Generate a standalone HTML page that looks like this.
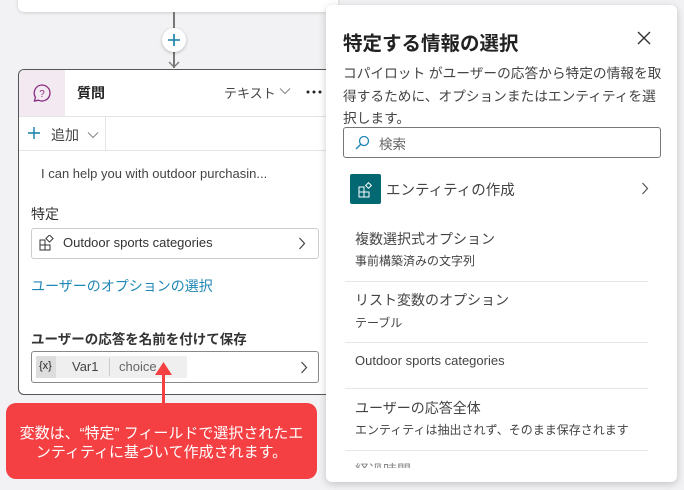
<!DOCTYPE html>
<html><head><meta charset="utf-8"><style>
*{box-sizing:border-box;margin:0;padding:0}
body{width:684px;height:490px;overflow:hidden;background:#f2f2f4;font-family:"Liberation Sans","Noto Sans CJK JP",sans-serif;position:relative;color:#242424}
.a{position:absolute}
</style></head><body>
<div class="a" style="left:18px;top:-10px;width:320px;height:22px;background:#fff;border-radius:6px;box-shadow:0 1px 3px rgba(0,0,0,.15)"></div>
<div class="a" style="left:173px;top:12px;width:1.5px;height:56px;background:#777"></div>
<div class="a" style="left:162px;top:28px;width:24px;height:24px;border-radius:50%;background:#fff;box-shadow:0 1px 3px rgba(0,0,0,.25)"></div>
<svg class="a" style="left:167px;top:33px" width="14" height="14"><path d="M7 1V13M1 7H13" stroke="#0f7fa8" stroke-width="1.6"/></svg>
<svg class="a" style="left:167px;top:60px" width="14" height="10"><path d="M2 2 L7 7 L12 2" stroke="#777" stroke-width="1.3" fill="none"/></svg>
<div class="a" style="left:18px;top:69px;width:330px;height:326px;background:#fff;border:1.5px solid #555;border-radius:6px;overflow:hidden">
 <div class="a" style="left:0;top:0;width:46px;height:46px;background:#f2e9f1"></div>
 <svg class="a" style="left:13px;top:13px" width="20" height="20"><path d="M10 2a8 8 0 1 1-3.5 15.2L2.5 18l.9-3.8A8 8 0 0 1 10 2z" stroke="#8a2a82" stroke-width="1.3" fill="none"/><text x="10" y="14" font-size="10" text-anchor="middle" fill="#8a2a82" font-family="Liberation Sans">?</text></svg>
 <div class="a" style="left:58px;top:13px;font-size:14px;font-weight:bold">質問</div>
 <div class="a" style="left:205px;top:13px;font-size:13px;color:#444">テキスト</div>
 <svg class="a" style="left:260px;top:17px" width="12" height="8"><path d="M1 1.5L6 6.5L11 1.5" stroke="#888" stroke-width="1.1" fill="none"/></svg>
 <svg class="a" style="left:287px;top:20px" width="16" height="4"><circle cx="2" cy="2" r="1.5" fill="#222"/><circle cx="8" cy="2" r="1.5" fill="#222"/><circle cx="14" cy="2" r="1.5" fill="#222"/></svg>
 <div class="a" style="left:0;top:46px;width:100%;height:1px;background:#e4e4e4"></div>
 <svg class="a" style="left:9px;top:57px" width="12" height="12"><path d="M6 0V12M0 6H12" stroke="#0f7fa8" stroke-width="1.4"/></svg>
 <div class="a" style="left:32px;top:55px;font-size:14px;color:#444">追加</div>
 <svg class="a" style="left:68px;top:61px" width="12" height="8"><path d="M1 1.5L6 6.5L11 1.5" stroke="#888" stroke-width="1.1" fill="none"/></svg>
 <div class="a" style="left:86px;top:47px;width:1px;height:33px;background:#e4e4e4"></div>
 <div class="a" style="left:0;top:80px;width:100%;height:1px;background:#e4e4e4"></div>
 <div class="a" style="left:22px;top:96px;font-size:13px;color:#444">I can help you with outdoor purchasin...</div>
 <div class="a" style="left:12px;top:134px;font-size:14px;color:#333">特定</div>
 <div class="a" style="left:12px;top:158px;width:288px;height:31px;border:1px solid #ccc;border-radius:3px;font-size:13px;padding:6px 0 0 31px;color:#333">Outdoor sports categories</div>
 <svg class="a" style="left:279px;top:167px" width="8" height="13"><path d="M1.5 1L6.5 6.5L1.5 12" stroke="#444" stroke-width="1.2" fill="none"/></svg>
 <svg class="a" style="left:20px;top:165px" width="16" height="16"><rect x="1" y="5" width="5" height="5" fill="none" stroke="#333"/><rect x="1" y="10" width="5" height="5" fill="none" stroke="#333"/><rect x="6" y="10" width="5" height="5" fill="none" stroke="#333"/><rect x="8" y="1" width="5" height="5" fill="none" stroke="#333" transform="rotate(45 10.5 3.5)"/></svg>
 <div class="a" style="left:12px;top:206px;font-size:14px;color:#1f87b5">ユーザーのオプションの選択</div>
 <div class="a" style="left:12px;top:258px;font-size:13.5px;font-weight:bold;color:#333">ユーザーの応答を名前を付けて保存</div>
 <div class="a" style="left:12px;top:281px;width:288px;height:32px;border:1.5px solid #888;border-radius:3px"></div>
 <div class="a" style="left:17px;top:286px;width:20px;height:22px;background:#ddd;font-size:11px;padding:4px 0 0 3px">{x}</div>
 <div class="a" style="left:37px;top:286px;width:131px;height:22px;background:#efefef"></div>
 <div class="a" style="left:53px;top:289px;font-size:13px;color:#444">Var1</div>
 <div class="a" style="left:90px;top:288px;width:1px;height:18px;background:#ccc"></div>
 <div class="a" style="left:100px;top:289px;font-size:13px;color:#666">choice</div>
 <svg class="a" style="left:281px;top:291px" width="8" height="13"><path d="M1.5 1L6.5 6.5L1.5 12" stroke="#444" stroke-width="1.2" fill="none"/></svg>
</div>
<div class="a" style="left:162px;top:372px;width:3px;height:32px;background:#f44043"></div>
<svg class="a" style="left:155px;top:362px" width="17" height="14"><path d="M8.5 0 L17 13 L0 13 Z" fill="#f44043"/></svg>
<div class="a" style="left:6px;top:403px;width:311px;height:76px;background:#f44043;border-radius:10px;color:#fff;font-size:15px;line-height:19px;text-align:center;padding-top:21px;white-space:nowrap">変数は、“特定” フィールドで選択されたエ<br>ンティティに基づいて作成されます。</div>

<div class="a" style="left:326px;top:5px;width:351px;height:477px;background:#fff;border-radius:6px;box-shadow:0 2px 8px rgba(0,0,0,.2)">
 <div class="a" style="left:17px;top:22px;font-size:19.5px;font-weight:bold;color:#222">特定する情報の選択</div>
 <svg class="a" style="left:311px;top:26px" width="14" height="14"><path d="M1 1L13 13M13 1L1 13" stroke="#333" stroke-width="1.4"/></svg>
 <div class="a" style="left:17px;top:58px;width:340px;font-size:13.7px;line-height:22.5px;color:#444;white-space:nowrap">コパイロット がユーザーの応答から特定の情報を取<br>得するために、オプションまたはエンティティを選<br>択します。</div>
 <div class="a" style="left:17px;top:122px;width:318px;height:31px;border:1px solid #777;border-radius:3px;font-size:13.5px;color:#666;padding:5px 0 0 35px">検索</div>
 <svg class="a" style="left:28px;top:130px" width="16" height="16"><circle cx="10" cy="6" r="4.5" stroke="#1f87b5" stroke-width="1.3" fill="none"/><path d="M6.8 9.2L2 14" stroke="#1f87b5" stroke-width="1.4"/></svg>
 <div class="a" style="left:24px;top:169px;width:31px;height:30px;background:#036872;border-radius:2px"></div>
 <svg class="a" style="left:32px;top:177px" width="16" height="16"><rect x="1" y="5" width="5" height="5" fill="none" stroke="#fff"/><rect x="1" y="10" width="5" height="5" fill="none" stroke="#fff"/><rect x="6" y="10" width="5" height="5" fill="none" stroke="#fff"/><rect x="8.5" y="1.5" width="4" height="4" fill="none" stroke="#fff" transform="rotate(45 10.5 3.5)"/></svg>
 <div class="a" style="left:60px;top:174px;font-size:14.5px;color:#444">エンティティの作成</div>
 <svg class="a" style="left:315px;top:177px" width="8" height="13"><path d="M1.5 1L6.5 6.5L1.5 12" stroke="#555" stroke-width="1.2" fill="none"/></svg>
 <div class="a" style="left:29px;top:224px;font-size:14px;color:#444">複数選択式オプション</div>
 <div class="a" style="left:29px;top:247px;font-size:12px;color:#444">事前構築済みの文字列</div>
 <div class="a" style="left:19px;top:276px;width:303px;height:1px;background:#e6e6e6"></div>
 <div class="a" style="left:29px;top:285px;font-size:14px;color:#444">リスト変数のオプション</div>
 <div class="a" style="left:29px;top:309px;font-size:12px;color:#444">テーブル</div>
 <div class="a" style="left:19px;top:337px;width:303px;height:1px;background:#e6e6e6"></div>
 <div class="a" style="left:29px;top:348px;font-size:13px;color:#444">Outdoor sports categories</div>
 <div class="a" style="left:19px;top:383px;width:303px;height:1px;background:#e6e6e6"></div>
 <div class="a" style="left:29px;top:393px;font-size:14px;color:#444">ユーザーの応答全体</div>
 <div class="a" style="left:29px;top:416px;font-size:12px;color:#444">エンティティは抽出されず、そのまま保存されます</div>
 <div class="a" style="left:19px;top:445px;width:303px;height:1px;background:#e6e6e6"></div>
 <div class="a" style="left:29px;top:455px;height:8px;overflow:hidden;font-size:14px;color:#888;line-height:20px">経過時間</div>
</div>
</body></html>
